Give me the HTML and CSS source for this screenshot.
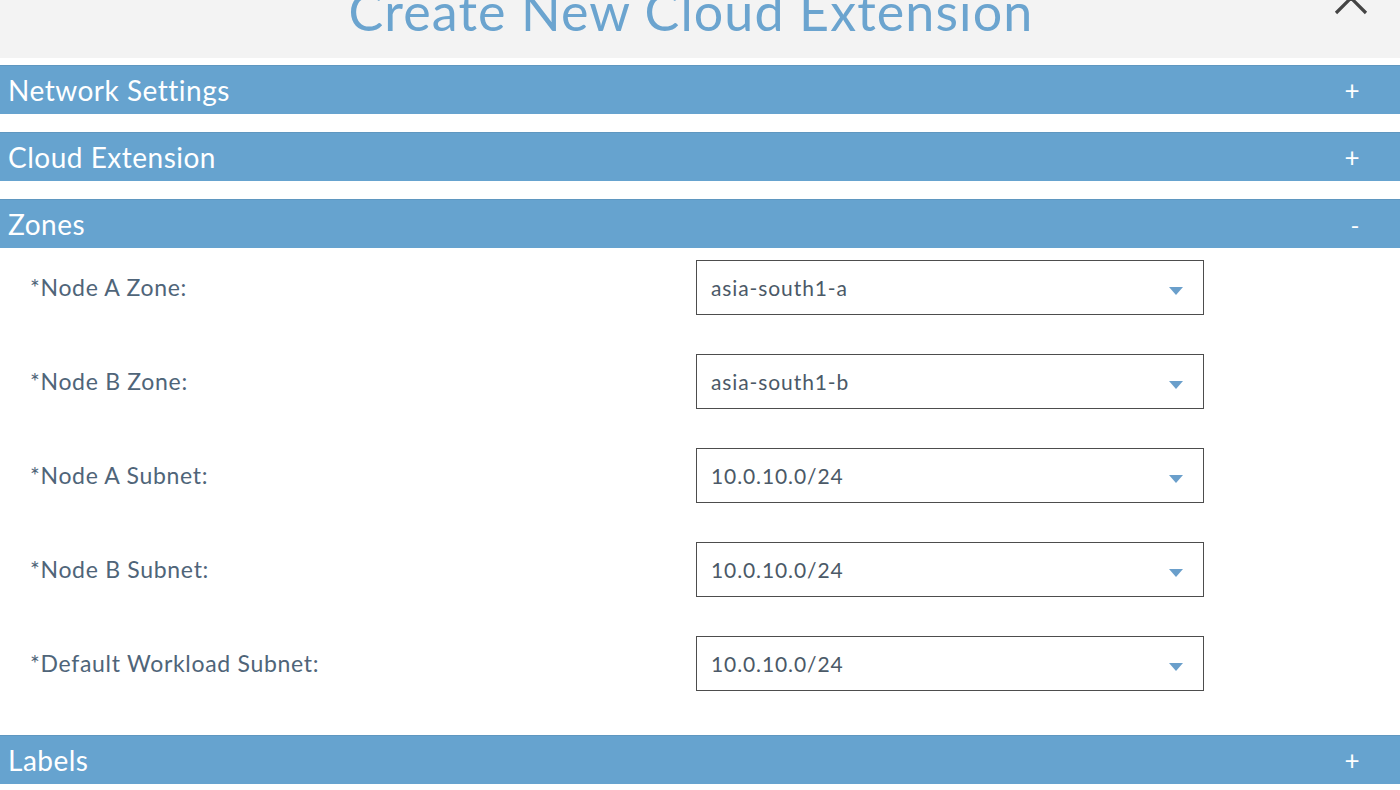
FILE: index.html
```html
<!DOCTYPE html>
<html>
<head>
<meta charset="utf-8">
<link rel="stylesheet" href="styles.css">
</head>
<body>
<div class="modal">
  <header class="modal-head">
    <h1 class="title">Create New Cloud Extension</h1>
    <span class="close" aria-label="close">
      <svg width="40" height="40" viewBox="0 0 40 40"><path d="M5 5 L35 35 M35 5 L5 35" stroke="#444" stroke-width="3.2" fill="none"/></svg>
    </span>
  </header>
  <section class="panel">
    <div class="bar"><span>Network Settings</span><span class="toggle">+</span></div>
  </section>
  <section class="panel">
    <div class="bar"><span>Cloud Extension</span><span class="toggle">+</span></div>
  </section>
  <section class="panel">
    <div class="bar"><span>Zones</span><span class="toggle minus">-</span></div>
    <div class="fields">
      <div class="row"><label class="lbl">*Node A Zone:</label><div class="select"><span>asia-south1-a</span><i class="caret"></i></div></div>
      <div class="row"><label class="lbl">*Node B Zone:</label><div class="select"><span>asia-south1-b</span><i class="caret"></i></div></div>
      <div class="row"><label class="lbl">*Node A Subnet:</label><div class="select"><span>10.0.10.0/24</span><i class="caret"></i></div></div>
      <div class="row"><label class="lbl">*Node B Subnet:</label><div class="select"><span>10.0.10.0/24</span><i class="caret"></i></div></div>
      <div class="row"><label class="lbl">*Default Workload Subnet:</label><div class="select"><span>10.0.10.0/24</span><i class="caret"></i></div></div>
    </div>
  </section>
  <section class="panel">
    <div class="bar"><span>Labels</span><span class="toggle">+</span></div>
  </section>
</div>
</body>
</html>
```

FILE: styles.css
```css
* { box-sizing: border-box; }
html, body { margin: 0; padding: 0; background: #fff; overflow: hidden; }
body { font-family: Lato, "Open Sans", sans-serif; width: 1400px; height: 790px; }

.modal { display: flex; flex-direction: column; }

.modal-head {
  height: 58px;
  background: #f3f3f3;
  position: relative;
  overflow: hidden;
  display: flex;
  justify-content: center;
}
.title {
  margin: -19px 0 0 -18px;
  font-size: 52px;
  line-height: 60px;
  font-weight: 400;
  color: #6ba4cf;
  letter-spacing: 1.1px;
  white-space: nowrap;
}
.close {
  position: absolute;
  right: 29px;
  top: -22px;
  width: 40px;
  height: 40px;
}

.panel { margin-top: 7px; }
.panel + .panel { margin-top: 18px; }

.bar {
  height: 49px;
  background: #66a3cf;
  color: #fff;
  display: flex;
  align-items: center;
  justify-content: space-between;
  padding: 0 38px 0 8px;
  font-size: 28px;
  letter-spacing: 0.5px;
  border-top: 1px solid #5f97c0;
}
.toggle { font-size: 26px; width: 20px; text-align: center; letter-spacing: 0; }
.toggle.minus { font-size: 24px; margin-right: -3px; }

.fields {
  padding: 12px 0 27px 0;
  display: flex;
  flex-direction: column;
  gap: 40px;
}
.row {
  display: flex;
  align-items: center;
  height: 54px;
}
.lbl {
  width: 696px;
  padding-left: 30px;
  font-size: 23px;
  letter-spacing: 0.7px;
  color: #4f6579;
}
.select {
  width: 508px;
  height: 55px;
  border: 1px solid #4d4d4d;
  display: flex;
  align-items: center;
  justify-content: space-between;
  padding: 0 20px 0 14px;
  font-size: 21px;
  letter-spacing: 0.9px;
  color: #4b5967;
}
.caret {
  width: 0; height: 0;
  border-left: 7px solid transparent;
  border-right: 7px solid transparent;
  border-top: 8px solid #6a9fcb;
  margin-top: 8px;
}
```
